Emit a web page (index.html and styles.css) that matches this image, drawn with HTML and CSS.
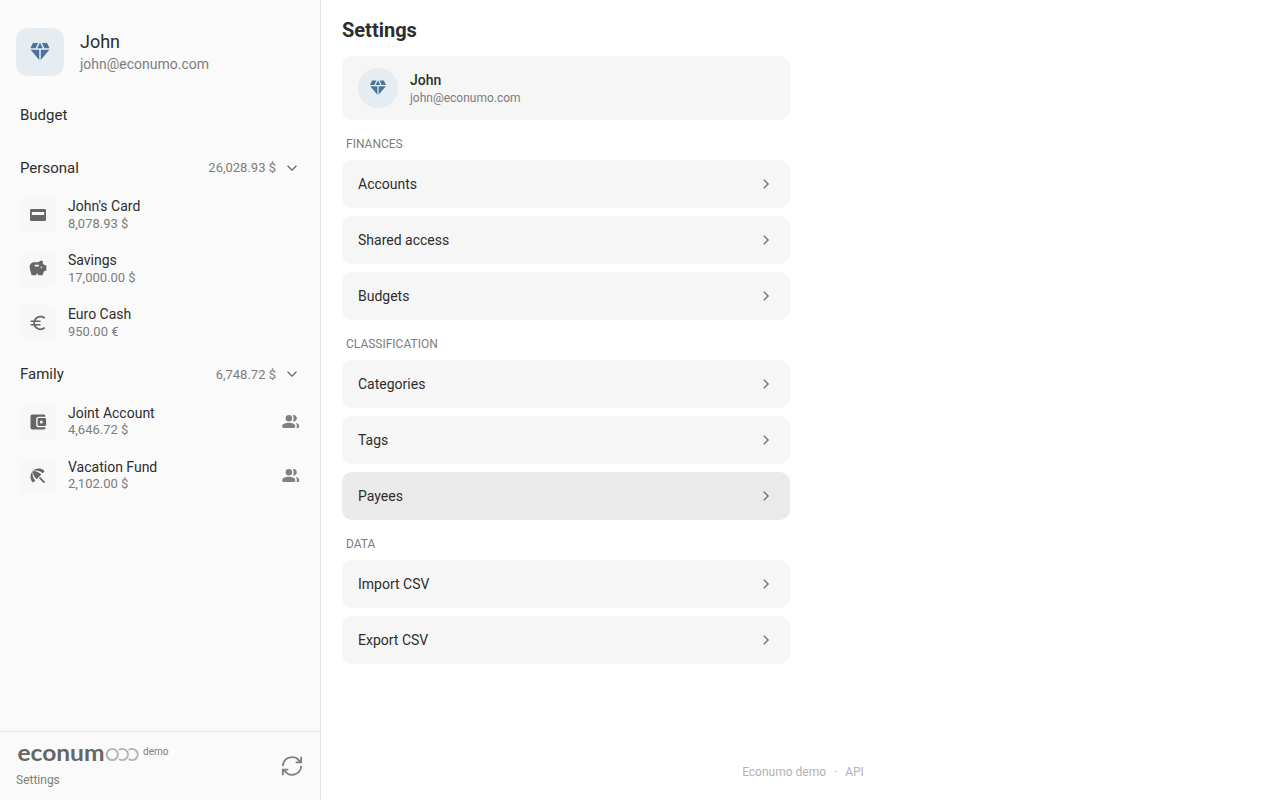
FILE: index.html
```html
<!DOCTYPE html>
<html lang="en">
<head>
  <meta charset="UTF-8" />
  <title>Econumo - Settings</title>
  <link rel="stylesheet" href="styles.css">
</head>
<body>
  <!-- Shared icons -->
  <svg class="sprite">
    <symbol id="diamond" viewBox="0 0 24 24"><path d="M12.16 3h-.32L9.21 8.25h5.58zM16.46 8.25h5.16L19 3h-5.16zM21.38 9.75h-8.63V20.1zM11.25 20.1V9.75H2.62zM7.54 8.25L10.16 3H5L2.38 8.25z"/></symbol>
    <symbol id="people" viewBox="0 0 24 24"><circle cx="10" cy="8" r="4.100"/><path d="M16 12.100c2.210 0 4-1.840 4-4.100s-1.790-4.100-4-4.100c-.400 0-.700.050-1 .150C15.600 5 16 6.500 16 8s-.400 3-1 3.950c.300.100.600.150 1 .150zM10 13.500c-3.500 0-8.500 1-8.500 4.300V18.200c0 1.100.900 1.900 2 1.900h12.500c1.100 0 2-.800 2-1.900v-.400c0-3.300-4.500-4.300-8-4.300zM18.300 13.900C19.500 14.800 20 16 20 17.500v.700c0 .700-.200 1.400-.500 1.900H21.200c1.100 0 1.800-.900 1.800-1.900v-.700c0-2-2-3.200-4.700-3.600z"/></symbol>
    <symbol id="down" viewBox="0 0 16 16"><path d="M3.600 5.700L8 10.100l4.400-4.400"/></symbol>
    <symbol id="right" viewBox="0 0 16 16"><path d="M5.700 3.600L10.100 8l-4.400 4.400"/></symbol>
  </svg>

  <div class="app">
    <aside class="sidebar">
      <div class="user">
        <div class="avatar"><svg><use href="#diamond"/></svg></div>
        <div>
          <div class="user-name">John</div>
          <div class="user-email">john@econumo.com</div>
        </div>
      </div>

      <a class="budget">Budget</a>

      <div class="folder personal">
        <span class="folder-name">Personal</span>
        <span class="folder-sum">26,028.93 $</span>
        <svg class="chevron"><use href="#down"/></svg>
      </div>
      <div class="accounts">
        <div class="account">
          <div class="account-icon"><svg viewBox="0 0 24 24"><path fill-rule="evenodd" d="M20 4.800H4c-.900 0-1.600.700-1.600 1.600v11.200c0 .900.700 1.600 1.600 1.600h16c.900 0 1.600-.700 1.600-1.600V6.400c0-.900-.700-1.600-1.600-1.600zM4.600 8.400h14.800V12H4.600z"/></svg></div>
          <div>
            <div class="account-name">John's Card</div>
            <div class="account-sum">8,078.93 $</div>
          </div>
        </div>
        <div class="account">
          <div class="account-icon"><svg viewBox="0 0 24 24"><path d="m19.830 7.500-2.270-2.270c.070-.420.180-.810.320-1.150.080-.180.120-.370.120-.580 0-.830-.670-1.500-1.500-1.500-1.640 0-3.090.790-4 2h-5C4.460 4 2 6.460 2 9.500c0 3 2.500 10 2.500 10H10v-1.700h2v1.700h5.500l1.680-4.800 2.820-.940V7.500h-2.170zM13 9H8V7h5v2zm3 2c-.550 0-1-.450-1-1s.450-1 1-1 1 .450 1 1-.450 1-1 1z"/></svg></div>
          <div>
            <div class="account-name">Savings</div>
            <div class="account-sum">17,000.00 $</div>
          </div>
        </div>
        <div class="account">
          <div class="account-icon"><svg viewBox="0 0 24 24"><path d="M15 18.500c-2.510 0-4.680-1.420-5.760-3.500H15v-1.700H8.580c-.050-.330-.080-.860-.080-1.300s.030-.970.080-1.300H15V9H9.240C10.320 6.920 12.500 5.500 15 5.500c1.610 0 3.090.590 4.230 1.570L20.700 5.500C19.200 4.100 17.300 3.400 15 3.400c-3.820 0-6.940 2.310-8.180 5.600H3.200v1.700h3.260c-.040.330-.060.960-.060 1.300s.020.970.060 1.300H3.200V15h3.620c1.240 3.290 4.360 5.600 8.180 5.600 2.200 0 4.200-.800 5.700-2.200l-1.480-1.470c-1.130.980-2.600 1.570-4.220 1.570z"/></svg></div>
          <div>
            <div class="account-name">Euro Cash</div>
            <div class="account-sum">950.00 €</div>
          </div>
        </div>
      </div>

      <div class="folder family">
        <span class="folder-name">Family</span>
        <span class="folder-sum">6,748.72 $</span>
        <svg class="chevron"><use href="#down"/></svg>
      </div>
      <div class="accounts shared">
        <div class="account">
          <div class="account-icon"><svg viewBox="0 0 24 24"><path fill-rule="evenodd" d="M9.800 15.500v-7c0-1.700 1.200-2.800 2.900-2.800H21V5c0-1.100-.900-2-2-2H5c-1.110 0-2 .900-2 2v14c0 1.100.890 2 2 2h14c1.100 0 2-.900 2-2v-.700h-8.300c-1.700 0-2.900-1.100-2.900-2.800zM13.200 7.300c-1.100 0-1.700.700-1.700 1.700v6c0 1 .600 1.700 1.700 1.700h6.900c1.100 0 1.700-.700 1.700-1.700V9c0-1-.600-1.700-1.700-1.700zM16 10.200a1.800 1.800 0 1 1 0 3.600 1.800 1.800 0 0 1 0-3.600z"/></svg></div>
          <div>
            <div class="account-name">Joint Account</div>
            <div class="account-sum">4,646.72 $</div>
          </div>
          <svg class="people"><use href="#people"/></svg>
        </div>
        <div class="account">
          <div class="account-icon"><svg viewBox="0 0 24 24"><path d="M13.127 14.560l1.430-1.430 6 6-1.430 1.430zM17.420 8.830l1.900-1.900c.500-.500.450-1.200-.100-1.650C15.300 2.300 9.900 2.100 5.960 5.960c3.930-1.300 8.310-.250 11.460 2.870zM5.950 5.980c-3.700 3.700-3.900 9.200-.700 13.200.4.500 1.200.550 1.700.100l1.880-1.860C5.700 14.290 4.650 9.910 5.950 5.980zm.020-.020l-.010.010c-.380 3.010 1.170 6.880 4.300 10.020l5.730-5.730c-3.130-3.130-7.010-4.680-10.020-4.300z"/></svg></div>
          <div>
            <div class="account-name">Vacation Fund</div>
            <div class="account-sum">2,102.00 $</div>
          </div>
          <svg class="people"><use href="#people"/></svg>
        </div>
      </div>

      <div class="sidebar-footer">
        <div>
          <div class="brand">
            <svg class="logo" viewBox="0 -10 124 34">
              <text x="1.500" y="17.500" textLength="87" lengthAdjust="spacingAndGlyphs">econum</text>
              <g class="rings">
                <circle cx="96.300" cy="11.500" r="5.600"/>
                <path d="M103 7a5.600 5.600 0 1 1 0 9M112.800 7a5.600 5.600 0 1 1 0 9"/>
              </g>
            </svg>
            <span class="demo">demo</span>
          </div>
          <a class="settings-link">Settings</a>
        </div>
        <svg class="sync" viewBox="0 0 24 24"><path d="M22 2v6h-6M2 12a10 10 0 0 1 18-5.500L22 8M2 22v-6h6M22 12a10 10 0 0 1-18 5.500L2 16"/></svg>
      </div>
    </aside>

    <main class="content">
      <h1>Settings</h1>
      <div class="settings">
        <div class="profile">
          <div class="avatar round"><svg><use href="#diamond"/></svg></div>
          <div>
            <div class="profile-name">John</div>
            <div class="profile-email">john@econumo.com</div>
          </div>
        </div>

        <h2>Finances</h2>
        <div class="list">
          <a class="item">Accounts<svg class="chevron"><use href="#right"/></svg></a>
          <a class="item">Shared access<svg class="chevron"><use href="#right"/></svg></a>
          <a class="item">Budgets<svg class="chevron"><use href="#right"/></svg></a>
        </div>

        <h2>Classification</h2>
        <div class="list">
          <a class="item">Categories<svg class="chevron"><use href="#right"/></svg></a>
          <a class="item">Tags<svg class="chevron"><use href="#right"/></svg></a>
          <a class="item active">Payees<svg class="chevron"><use href="#right"/></svg></a>
        </div>

        <h2>Data</h2>
        <div class="list">
          <a class="item">Import CSV<svg class="chevron"><use href="#right"/></svg></a>
          <a class="item">Export CSV<svg class="chevron"><use href="#right"/></svg></a>
        </div>
      </div>
      <footer>
        <a>Econumo demo</a><span>·</span><a>API</a>
      </footer>
    </main>
  </div>
</body>
</html>
```

FILE: styles.css
```css
* {
  box-sizing: border-box;
}

body {
  margin: 0;
  font-family: Roboto, sans-serif;
  color: #2d2d2d;
  background: #fff;
}

svg {
  fill: currentColor;
  flex-shrink: 0;
}

.sprite {
  display: none;
}

.chevron {
  width: 16px;
  height: 16px;
  fill: none;
  stroke: #666;
  stroke-width: 1.3;
}

.app {
  display: flex;
  height: 100vh;
}

/* Sidebar */
.sidebar {
  display: flex;
  flex-direction: column;
  width: 321px;
  background: #fafafa;
  border-right: 1px solid #e4e4e4;
}

.user {
  display: flex;
  gap: 16px;
  padding: 28px 16px 0;
}

.avatar {
  display: flex;
  justify-content: center;
  align-items: center;
  width: 48px;
  height: 48px;
  padding-bottom: 1px;
  border-radius: 12px;
  background: #e5edf3;
  color: #4a7499;
}

.avatar svg {
  width: 24px;
  height: 24px;
}

.user-name {
  padding-top: 2px;
  font-size: 18px;
  line-height: 24px;
}

.user-email {
  font-size: 14px;
  line-height: 20px;
  color: #7d7d7d;
}

.budget {
  margin-top: 29px;
  padding-left: 20px;
  font-size: 15px;
  line-height: 20px;
}

.folder {
  display: flex;
  align-items: center;
  margin-top: 33px;
  padding: 0 20px;
  height: 20px;
}

.folder.family {
  margin-top: 23px;
}

.folder-name {
  flex: 1;
  font-size: 15px;
}

.folder-sum {
  margin-right: 8px;
  font-size: 13px;
  color: #7d7d7d;
}

.personal .folder-sum {
  margin-bottom: 2px;
}

.accounts {
  display: flex;
  flex-direction: column;
  gap: 18px;
  padding: 19px 20px 0;
}

.accounts.shared {
  padding-top: 20px;
}

.account {
  display: flex;
  gap: 12px;
  height: 36px;
}

.account-icon {
  display: flex;
  justify-content: center;
  align-items: center;
  width: 36px;
  height: 36px;
  border-radius: 8px;
  background: #f7f7f7;
  color: #666;
}

.account-icon svg {
  width: 20px;
  height: 20px;
}

.account-name {
  font-size: 14px;
  line-height: 18px;
}

.account-sum {
  font-size: 13px;
  line-height: 17px;
  color: #7d7d7d;
}

.shared .account-sum {
  line-height: 15px;
}

.people {
  width: 19px;
  height: 19px;
  margin: 8px 0 0 auto;
  color: #808080;
}

.sidebar-footer {
  display: flex;
  justify-content: space-between;
  height: 69px;
  margin-top: auto;
  padding: 1px 16px 0;
  border-top: 1px solid #e4e4e4;
}

.brand {
  display: flex;
  gap: 3px;
}

.logo {
  width: 124px;
  height: 34px;
}

.logo text {
  font-family: Lato, sans-serif;
  font-size: 23px;
  font-weight: 700;
  fill: #666;
}

.rings {
  fill: none;
  stroke: #b5b5b5;
  stroke-width: 2;
}

.demo {
  margin-top: 10px;
  font-size: 10px;
  line-height: 17px;
  color: #7d7d7d;
}

.settings-link {
  display: block;
  margin-top: 5px;
  font-size: 12px;
  line-height: 16px;
  color: #7d7d7d;
}

.sync {
  width: 22px;
  height: 22px;
  margin: 22px 1px 0 0;
  fill: none;
  stroke: #808080;
  stroke-width: 2;
}

/* Content */
.content {
  flex: 1;
  display: flex;
  flex-direction: column;
  padding: 16px 21px 20px;
}

h1 {
  margin: 0 0 12px;
  font-size: 20px;
  line-height: 28px;
  font-weight: 700;
}

.settings {
  width: 448px;
}

.profile {
  display: flex;
  align-items: center;
  gap: 12px;
  height: 64px;
  padding: 0 16px;
  border-radius: 10px;
  background: #f6f6f6;
}

.avatar.round {
  width: 40px;
  height: 40px;
  border-radius: 50%;
}

.avatar.round svg {
  width: 20px;
  height: 20px;
}

.profile-name {
  padding-top: 2px;
  font-size: 14px;
  line-height: 18px;
  font-weight: 500;
}

.profile-email {
  font-size: 12px;
  line-height: 18px;
  color: #7d7d7d;
}

h2 {
  margin: 16px 4px 8px;
  font-size: 12px;
  line-height: 16px;
  font-weight: 400;
  text-transform: uppercase;
  color: #7d7d7d;
}

.list {
  display: flex;
  flex-direction: column;
  gap: 8px;
}

.item {
  display: flex;
  justify-content: space-between;
  align-items: center;
  height: 48px;
  padding: 0 16px;
  border-radius: 10px;
  background: #f6f6f6;
  font-size: 14px;
}

.item.active {
  background: #eaeaea;
}

footer {
  display: flex;
  justify-content: center;
  gap: 8px;
  margin-top: auto;
  padding-left: 5px;
  font-size: 12px;
  line-height: 16px;
  color: #b3b3b3;
}
```
